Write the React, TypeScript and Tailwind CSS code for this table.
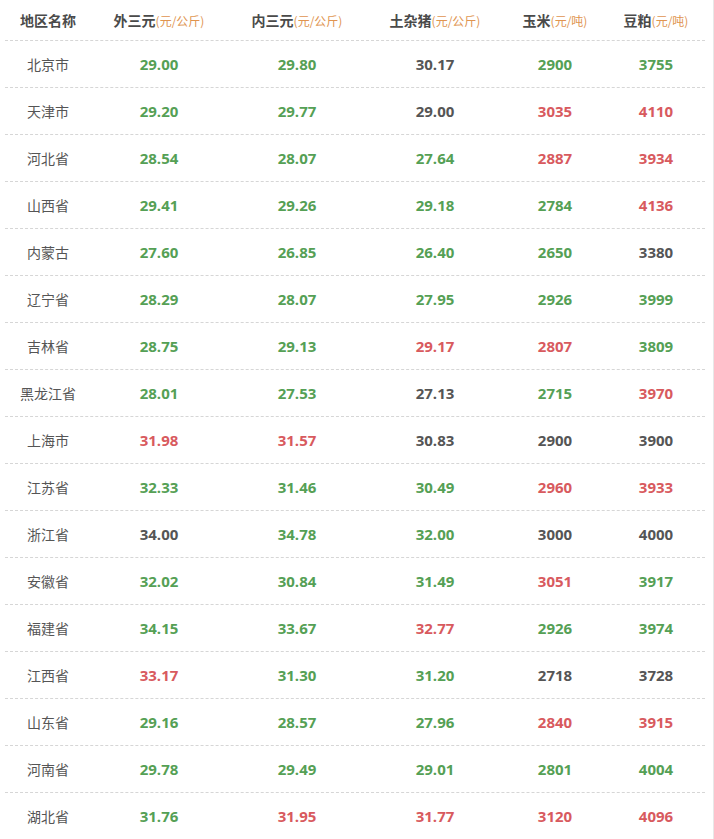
import React from "react";

const G = "g", R = "r", K = "k";
type Cell = [string, string];
const rows: [string, Cell, Cell, Cell, Cell, Cell][] = [
  ["北京市", ["29.00", G], ["29.80", G], ["30.17", K], ["2900", G], ["3755", G]],
  ["天津市", ["29.20", G], ["29.77", G], ["29.00", K], ["3035", R], ["4110", R]],
  ["河北省", ["28.54", G], ["28.07", G], ["27.64", G], ["2887", R], ["3934", R]],
  ["山西省", ["29.41", G], ["29.26", G], ["29.18", G], ["2784", G], ["4136", R]],
  ["内蒙古", ["27.60", G], ["26.85", G], ["26.40", G], ["2650", G], ["3380", K]],
  ["辽宁省", ["28.29", G], ["28.07", G], ["27.95", G], ["2926", G], ["3999", G]],
  ["吉林省", ["28.75", G], ["29.13", G], ["29.17", R], ["2807", R], ["3809", G]],
  ["黑龙江省", ["28.01", G], ["27.53", G], ["27.13", K], ["2715", G], ["3970", R]],
  ["上海市", ["31.98", R], ["31.57", R], ["30.83", K], ["2900", K], ["3900", K]],
  ["江苏省", ["32.33", G], ["31.46", G], ["30.49", G], ["2960", R], ["3933", R]],
  ["浙江省", ["34.00", K], ["34.78", G], ["32.00", G], ["3000", K], ["4000", K]],
  ["安徽省", ["32.02", G], ["30.84", G], ["31.49", G], ["3051", R], ["3917", G]],
  ["福建省", ["34.15", G], ["33.67", G], ["32.77", R], ["2926", G], ["3974", G]],
  ["江西省", ["33.17", R], ["31.30", G], ["31.20", G], ["2718", K], ["3728", K]],
  ["山东省", ["29.16", G], ["28.57", G], ["27.96", G], ["2840", R], ["3915", R]],
  ["河南省", ["29.78", G], ["29.49", G], ["29.01", G], ["2801", G], ["4004", G]],
  ["湖北省", ["31.76", G], ["31.95", R], ["31.77", R], ["3120", R], ["4096", R]],
];

const colorCls = (c: string) =>
  c === G ? "text-[#55a055]" : c === R ? "text-[#d85a5e]" : "text-[#555555]";

const cols = "grid grid-cols-[86px_136px_140px_136px_104px_98px]";

const headers: [string, string][] = [
  ["外三元", "(元/公斤)"],
  ["内三元", "(元/公斤)"],
  ["土杂猪", "(元/公斤)"],
  ["玉米", "(元/吨)"],
  ["豆粕", "(元/吨)"],
];

export default function App() {
  return (
    <div
      className="w-[714px] h-[839px] bg-white overflow-hidden border-r border-[#e8e8e8]"
      style={{ fontFamily: '"Noto Sans CJK SC", "Noto Sans", sans-serif' }}
    >
      <div className="ml-[5px] w-[700px]">
        <div className={`${cols} h-[41px] items-center border-b border-dashed border-[#d6d6d6]`}>
          <div className="text-center text-[14px] font-bold text-[#4a4a4a]">地区名称</div>
          {headers.map(([a, b]) => (
            <div key={a} className="text-center text-[14px] font-bold text-[#4a4a4a]">
              {a}
              <span className="text-[12px] font-normal text-[#e0944f]">{b}</span>
            </div>
          ))}
        </div>
        {rows.map((r) => (
          <div
            key={r[0]}
            className={`${cols} h-[47px] items-center border-b border-dashed border-[#d6d6d6]`}
          >
            <div className="text-center text-[14px] text-[#555555]">{r[0]}</div>
            {r.slice(1).map((c, i) => {
              const cell = c as Cell;
              return (
                <div
                  key={i}
                  className={`text-center text-[15px] font-bold ${colorCls(cell[1])}`}
                  style={{ fontFamily: '"Open Sans", "Noto Sans", sans-serif' }}
                >
                  {cell[0]}
                </div>
              );
            })}
          </div>
        ))}
      </div>
    </div>
  );
}
